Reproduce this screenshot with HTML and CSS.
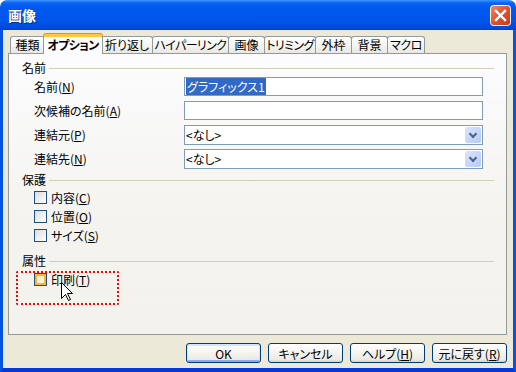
FILE: index.html
```html
<!DOCTYPE html>
<html lang="ja">

<head>
    <meta charset="utf-8">
    <title>画像</title>
    <link rel="stylesheet" href="styles.css">
</head>

<body>
    <div class="window">
        <div class="titlebar">
            <span class="title">画像</span>
            <span class="close">
                <svg width="21" height="21" viewBox="0 0 21 21">
                    <defs>
                        <linearGradient id="cg" x1="0" y1="0" x2="1" y2="1">
                            <stop offset="0" stop-color="#F08A6A" />
                            <stop offset="0.5" stop-color="#E0522E" />
                            <stop offset="1" stop-color="#C4391A" />
                        </linearGradient>
                    </defs>
                    <rect x="0.5" y="0.5" width="20" height="20" rx="3" fill="url(#cg)" stroke="#ffffff" />
                    <path d="M6 6 L15 15 M15 6 L6 15" stroke="#ffffff" stroke-width="2.4" stroke-linecap="square" />
                </svg>
            </span>
        </div>

        <div class="client">
            <div class="tabs">
                <div class="tab w35">種類</div>
                <div class="tab valgt w60">オプション</div>
                <div class="tab w52">折り返し</div>
                <div class="tab w77 kana">ハイパーリンク</div>
                <div class="tab w37">画像</div>
                <div class="tab w52 kana">トリミング</div>
                <div class="tab w37">外枠</div>
                <div class="tab w37">背景</div>
                <div class="tab w38 kana">マクロ</div>
            </div>

            <div class="panel">
                <div class="group-head"><span>名前</span></div>
                <div class="field first">
                    <label>名前(<u>N</u>)</label>
                    <div class="input"><span class="selected">グラフィックス1</span></div>
                </div>
                <div class="field">
                    <label>次候補の名前(<u>A</u>)</label>
                    <div class="input"></div>
                </div>
                <div class="field">
                    <label>連結元(<u>P</u>)</label>
                    <div class="select"><span>&lt;なし&gt;</span><span class="drop"></span></div>
                </div>
                <div class="field">
                    <label>連結先(<u>N</u>)</label>
                    <div class="select"><span>&lt;なし&gt;</span><span class="drop"></span></div>
                </div>

                <div class="group-head protect"><span>保護</span></div>
                <div class="check first"><span class="box"></span><span>内容(<u>C</u>)</span></div>
                <div class="check"><span class="box"></span><span>位置(<u>O</u>)</span></div>
                <div class="check"><span class="box"></span><span>サイズ(<u>S</u>)</span></div>

                <div class="group-head attr"><span>属性</span></div>
                <div class="check first"><span class="box hover"></span><span>印刷(<u>T</u>)</span></div>

                <div class="mark"></div>
                <svg class="cursor" width="13" height="20" viewBox="0 0 13 20">
                    <path d="M0.5 0.5 L0.5 16.5 L4.5 12.5 L7.5 18.5 L9.5 17.5 L6.5 11.5 L11.5 11.5 Z" fill="#ffffff" stroke="#000000" />
                </svg>
            </div>

            <div class="buttons">
                <button class="default">OK</button>
                <button>キャンセル</button>
                <button>ヘルプ(<u>H</u>)</button>
                <button>元に戻す(<u>R</u>)</button>
            </div>
        </div>
    </div>
</body>

</html>
```

FILE: styles.css
```css
* {
    box-sizing: border-box;
}

body {
    margin: 0;
    font-family: "Noto Sans CJK JP", "Liberation Sans", sans-serif;
    font-size: 12px;
    font-feature-settings: "palt";
    color: #000;
}

.window {
    width: 516px;
    height: 372px;
    display: flex;
    flex-direction: column;
    overflow: hidden;
}

/* title bar */
.titlebar {
    height: 30px;
    display: flex;
    align-items: center;
    justify-content: space-between;
    padding: 0 5px 0 8px;
    border-radius: 7px 7px 0 0;
    background: linear-gradient(#3D95FF 0, #0A62F2 3px, #0058EE 8px, #0056EC 20px, #0049DE 28px, #0040D2 30px);
}

.title {
    color: #fff;
    font-weight: bold;
    font-size: 14px;
    text-shadow: 1px 1px 0 #0A2A8A;
}

.close {
    display: flex;
    margin-top: 1px;
}

/* client area */
.client {
    flex: 1;
    background: #ECE9D8;
    border: 3px solid #0553E1;
    border-top: 0;
    border-bottom: 4px solid #0838D4;
    padding: 4px 6px 0 5px;
}

.tabs {
    height: 19px;
    display: flex;
    align-items: flex-end;
    padding-left: 2px;
    position: relative;
    z-index: 2;
}

.tab {
    height: 17px;
    line-height: 15px;
    padding: 0;
    text-align: center;
    border: 1px solid #919B9C;
    border-bottom: 0;
    border-radius: 3px 3px 0 0;
    background: linear-gradient(#FFFFFF, #F3F3EF 60%, #E8E7E1);
    white-space: nowrap;
    margin-right: -1px;
}

.tab.kana {
    letter-spacing: -0.6px;
}

.w35 { width: 35px; }
.w37 { width: 37px; }
.w38 { width: 38px; }
.w52 { width: 52px; }
.w60 { width: 60px; }
.w77 { width: 77px; }

.tab.valgt {
    height: 20px;
    margin-bottom: -1px;
    margin-left: -1px;
    margin-right: -2px;
    position: relative;
    z-index: 1;
    line-height: 16px;
    font-weight: bold;
    letter-spacing: -0.6px;
    background: #FCFCFE;
    border-top: 3px solid #FFC83C;
    box-shadow: 0 -1px 0 #E68B2C;
}

.panel {
    height: 282px;
    border: 1px solid #919B9C;
    background: linear-gradient(#FCFCFE, #F4F3EE 60%, #F3F2EC);
    position: relative;
    padding: 7px 12px 0 13px;
}

.group-head {
    height: 14px;
    display: flex;
    align-items: center;
    gap: 3px;
    line-height: 14px;
}

.group-head::after {
    content: "";
    flex: 1;
    height: 1px;
    background: #D0D0BF;
}

.group-head.protect {
    margin-top: 3px;
}

.group-head.attr {
    margin-top: 9px;
}

.field {
    display: flex;
    height: 20px;
    margin-bottom: 4px;
}

.field.first {
    margin-top: 2px;
}

.field label {
    width: 162px;
    padding-left: 12px;
    line-height: 19px;
}

.input,
.select {
    width: 299px;
    height: 19px;
    border: 1px solid #7F9DB9;
    background: #fff;
    padding-left: 1px;
    line-height: 17px;
}

.select {
    height: 20px;
    display: flex;
    justify-content: space-between;
    padding: 0 1px 0 1px;
    line-height: 18px;
}

.selected {
    background: #316AC5;
    color: #fff;
    padding: 0 1px;
}

.drop {
    width: 16px;
    height: 16px;
    margin-top: 1px;
    border-radius: 2px;
    background: linear-gradient(135deg, #D8E4FC, #B6CAF6);
    position: relative;
}

.drop::after {
    content: "";
    position: absolute;
    left: 5px;
    top: 4px;
    width: 4px;
    height: 4px;
    border-right: 2px solid #4D6185;
    border-bottom: 2px solid #4D6185;
    transform: rotate(45deg);
}

.check {
    height: 19px;
    display: flex;
    align-items: center;
    padding-left: 12px;
    gap: 4px;
}

.check.first {
    margin-top: 1px;
}

.group-head.attr + .check.first {
    margin-top: 2px;
}

.box {
    width: 13px;
    height: 13px;
    border: 1px solid #1C5180;
    background: linear-gradient(135deg, #DCDCD7, #FFFFFF);
}

.box.hover {
    box-shadow: inset 0 0 0 2px #F8B636;
    background: linear-gradient(135deg, #F5E3B0, #FFFFFF);
}

.mark {
    position: absolute;
    left: 7px;
    top: 217px;
    width: 103px;
    height: 34px;
    border: 2px dotted #FF0000;
    border-radius: 2px;
}

.cursor {
    position: absolute;
    left: 52px;
    top: 228px;
}

.buttons {
    display: flex;
    justify-content: flex-end;
    gap: 7px;
    margin-top: 8px;
}

button {
    width: 75px;
    height: 20px;
    padding: 0;
    font-family: inherit;
    font-size: 12px;
    font-feature-settings: "palt";
    border: 1px solid #003C74;
    border-radius: 3px;
    background: linear-gradient(#FFFFFF, #F4F3EE 50%, #ECEBE6 85%, #D8D2C6);
    line-height: 17px;
}

button.default {
    box-shadow: inset 0 1px 0 1px #CEE7FF, inset 0 -1px 0 1px #8FA8F0;
}
```
